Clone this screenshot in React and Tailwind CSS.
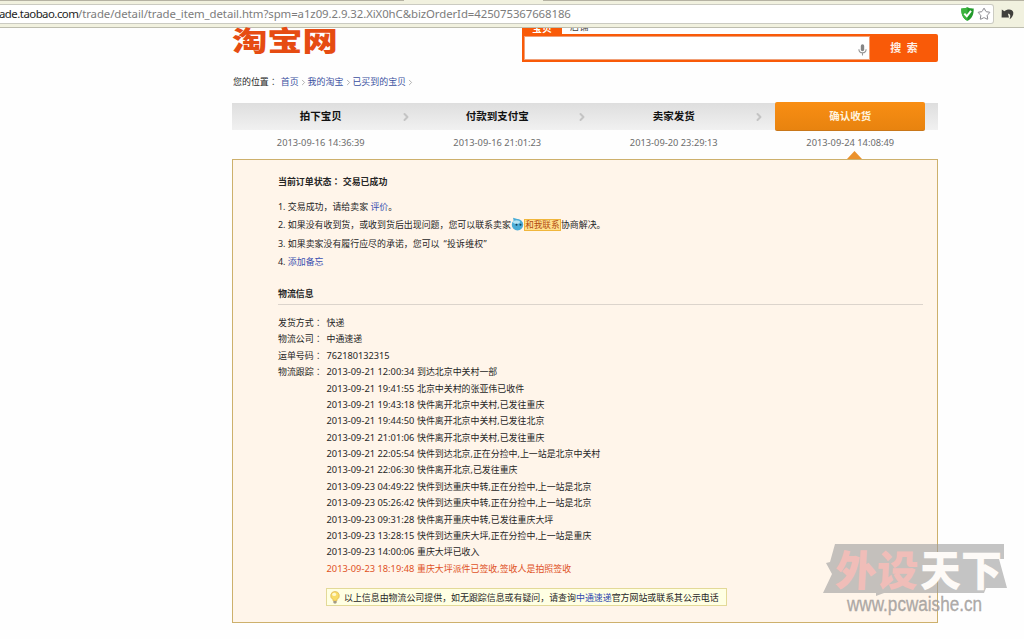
import { ChevronRight, Star } from 'lucide-react';

const steps = [
  { title: '拍下宝贝', time: '2013-09-16 14:36:39' },
  { title: '付款到支付宝', time: '2013-09-16 21:01:23' },
  { title: '卖家发货', time: '2013-09-20 23:29:13' },
  { title: '确认收货', time: '2013-09-24 14:08:49', active: true },
];

const shipping = [
  { label: '发货方式', value: '快递' },
  { label: '物流公司', value: '中通速递' },
  { label: '运单号码', value: '762180132315', number: true },
];

const tracking = [
  { time: '2013-09-21 12:00:34', text: '到达北京中关村一部' },
  { time: '2013-09-21 19:41:55', text: '北京中关村的张亚伟已收件' },
  { time: '2013-09-21 19:43:18', text: '快件离开北京中关村,已发往重庆' },
  { time: '2013-09-21 19:44:50', text: '快件离开北京中关村,已发往北京' },
  { time: '2013-09-21 21:01:06', text: '快件离开北京中关村,已发往重庆' },
  { time: '2013-09-21 22:05:54', text: '快件到达北京,正在分捡中,上一站是北京中关村' },
  { time: '2013-09-21 22:06:30', text: '快件离开北京,已发往重庆' },
  { time: '2013-09-23 04:49:22', text: '快件到达重庆中转,正在分捡中,上一站是北京' },
  { time: '2013-09-23 05:26:42', text: '快件到达重庆中转,正在分捡中,上一站是北京' },
  { time: '2013-09-23 09:31:28', text: '快件离开重庆中转,已发往重庆大坪' },
  { time: '2013-09-23 13:28:15', text: '快件到达重庆大坪,正在分捡中,上一站是重庆' },
  { time: '2013-09-23 14:00:06', text: '重庆大坪已收入' },
  { time: '2013-09-23 18:19:48', text: '重庆大坪派件已签收,签收人是拍照签收', last: true },
];

function ShieldIcon() {
  return (
    <svg className="h-[14px] w-[13px]" viewBox="0 0 13 14">
      <path d="M6.5 0.3 C8.5 1.4 10.5 1.6 12.7 1.4 C12.8 7.5 11.2 11.5 6.5 13.7 C1.8 11.5 0.2 7.5 0.3 1.4 C2.5 1.6 4.5 1.4 6.5 0.3Z" fill="#239a2b" />
      <path d="M6.5 0.3 C4.5 1.4 2.5 1.6 0.3 1.4 C0.2 7.5 1.8 11.5 6.5 13.7Z" fill="#3cb43f" />
      <path d="M3.3 6.6 L5.8 9.3 L10 3.8" fill="none" stroke="#fff" strokeWidth="2" />
    </svg>
  );
}

function UndoIcon() {
  return (
    <svg className="h-[12px] w-[13px]" viewBox="0 0 13 12">
      <path d="M0.8 1.5 L3.4 3.3 C6 0.6 11.8 0.6 12.3 4.6 C12.6 7.5 11 9.8 8.6 11.2 C9.9 8.2 9.4 5.6 6.9 5.8 L8 9.4 L0.6 9.6Z" fill="#403f3c" />
    </svg>
  );
}

function MicIcon() {
  return (
    <svg className="mr-[2px] h-[12px] w-[9px]" viewBox="0 0 9 12">
      <rect x="2.8" y="0.3" width="3.4" height="7" rx="1.7" fill="#858585" />
      <path d="M0.9 5.2 C0.9 10 8.1 10 8.1 5.2 M4.5 8.8 V11.6" fill="none" stroke="#959595" strokeWidth="1.1" />
    </svg>
  );
}

function BrowserBar() {
  return (
    <div className="flex h-7 flex-col border-b border-[#bdbdae] bg-[#f1f1df]">
      <div className="flex h-px">
        <div className="w-[404px] bg-[#b5b2a3]" />
        <div className="w-[139px]" />
        <div className="grow bg-[#b5b2a3]" />
      </div>
      <div className="mt-[3px] flex h-5 items-center">
        <div className="flex h-5 w-[994px] items-center rounded-r-[3px] border border-l-0 border-[#cbcbc2] bg-white">
          <div className="-ml-px flex grow whitespace-pre font-['Noto_Sans'] text-[11.4px] text-[#7c7c7c]">
            <span className="w-[79px] tracking-[-0.52px] text-[#1d1d1d]">ade.taobao.com</span>
            <span className="tracking-[-0.08px]">/trade/detail/trade_item_detail.htm?spm=a1z09.2.9.32.XiX0hC&amp;bizOrderId=425075367668186</span>
          </div>
          <ShieldIcon />
          <Star className="ml-[3px] mr-[2px] size-[14px] text-[#85858a]" strokeWidth={1.7} />
        </div>
        <div className="ml-[7px]">
          <UndoIcon />
        </div>
      </div>
    </div>
  );
}

function Header() {
  return (
    <header className="flex h-[35px] justify-between">
      <div className="-mt-[1px] h-[35px] origin-top scale-y-[0.77] whitespace-nowrap text-[35.3px] leading-[35px] font-black text-[#e64c12]">
        淘宝网
      </div>
      <div className="w-[416px]">
        <div className="flex h-[6px] text-[10px] leading-[4px] font-bold">
          <div className="flex w-10 items-start justify-center overflow-hidden bg-[#f95a08] text-white">
            <span className="-mt-[2px]">宝贝</span>
          </div>
          <div className="ml-2 flex items-start overflow-hidden text-[9.3px] font-normal text-[#444]">
            <span className="-mt-[3px]">店铺</span>
          </div>
        </div>
        <div className="flex h-[28px] overflow-hidden rounded-r-[2px] bg-[#f95a08]">
          <div className="my-[2px] ml-[2px] flex w-[346px] items-center justify-end border border-[#f0a078] bg-white pt-[3px]">
            <MicIcon />
          </div>
          <div className="flex grow items-center justify-center whitespace-pre text-[11px] font-bold text-[#fff0e6]">搜  索</div>
        </div>
      </div>
    </header>
  );
}

// the TC face centres the full-width colon in its cell
function Colon() {
  return <span className="font-['Noto_Sans_CJK_TC']">：</span>;
}

function Breadcrumb() {
  return (
    <nav className="ml-[1px] flex h-[14px] items-center text-[8.95px] leading-[14px]">
      <span className="mr-[3px]">您的位置<Colon /></span>
      {['首页', '我的淘宝', '已买到的宝贝'].map((name) => (
        <span key={name} className="flex items-center text-[#3a50a0]">
          {name}
          <ChevronRight className="mr-[-0.3px] ml-[0.3px] size-[9px] text-[#999]" />
        </span>
      ))}
    </nav>
  );
}

function Steps() {
  return (
    <div className="grid h-[57px] grid-cols-4">
      {steps.map((step) => (
        <div key={step.title} className="flex flex-col">
          <div className="relative mt-[1px] flex h-[27px] items-center justify-center bg-linear-to-b from-[#dedede] to-[#f1f1f1] pt-[1px] pl-[1px] text-[10.5px] font-bold text-[#111]">
            {step.active ? (
              <div className="-mt-[2px] -mb-[1px] flex h-[29px] w-[150px] shrink-0 items-center justify-center rounded-[2px] border-b border-[#c9771a] bg-linear-to-b from-[#f98e13] to-[#e8830f] pt-[2px] text-[#fff3df]">
                {step.title}
              </div>
            ) : (
              <>
                {step.title}
                <ChevronRight className="absolute right-[-3px] size-[12px] text-[#c4c4c4]" strokeWidth={4} />
              </>
            )}
          </div>
          <div className="mt-[5px] pl-[1px] text-center font-['Noto_Sans'] text-[9.3px] leading-[15px] text-[#6c6c6c]">{step.time}</div>
          {step.active && (
            <svg className="mt-[1px] ml-[85px] h-[8px] w-[15px]" viewBox="0 0 15 8">
              <path d="M0 8 L7.5 0 L15 8Z" fill="#eb922c" />
            </svg>
          )}
        </div>
      ))}
    </div>
  );
}

function WangwangBadge() {
  return (
    <span className="flex items-center">
      <svg className="mb-[2px] h-[14px] w-[13px]" viewBox="0 0 13 14">
        <circle cx="6.5" cy="7.8" r="5.7" fill="#4aacd6" />
        <path d="M2 0.8 L8 2.5 L3 5Z" fill="#4aacd6" />
        <ellipse cx="5.5" cy="5" rx="3.5" ry="1.8" fill="#b4e3f3" />
        <circle cx="5.5" cy="7.8" r="1" fill="#173e59" />
        <circle cx="9.5" cy="7.8" r="1" fill="#173e59" />
      </svg>
      <span className="flex h-[12px] w-[37px] items-center justify-center border border-[#f0b63c] bg-[#ffe18d] text-[8.6px] leading-none text-[#b34a10]">和我联系</span>
    </span>
  );
}

function Notices() {
  return (
    <ol className="mt-[9px] leading-[18.5px]">
      <li>1. 交易成功，请给卖家 <span className="text-[#3a50b0]">评价</span>。</li>
      <li className="flex h-[18.5px] items-center whitespace-pre">
        2. 如果没有收到货，或收到货后出现问题，您可以联系卖家
        <WangwangBadge />
        协商解决。
      </li>
      <li>3. 如果卖家没有履行应尽的承诺，您可以<span className="ml-[4px] tracking-[0.2px]">“投诉维权”</span></li>
      <li>4. <span className="text-[#3a50b0]">添加备忘</span></li>
    </ol>
  );
}

function Logistics() {
  return (
    <section className="mt-[15px]">
      <h3 className="h-[18px] border-b border-[#dcd4cc] font-bold leading-[14px]">物流信息</h3>
      <div className="mt-[10.6px] leading-[16.38px]">
        {shipping.map((item) => (
          <div key={item.label} className="flex h-[16.38px]">
            <span className="w-[48.5px]">{item.label}<Colon /></span>
            <span className={item.number ? 'text-[9.2px]' : ''}>{item.value}</span>
          </div>
        ))}
        <div className="flex">
          <span className="w-[48.5px] shrink-0">物流跟踪<Colon /></span>
          <ul>
            {tracking.map((row) => (
              <li key={row.time} className={`flex h-[16.38px] whitespace-nowrap ${row.last ? 'text-[#e0521f]' : ''}`}>
                <span className="w-[90.5px] text-[9.3px]">{row.time}</span>
                <span>{row.text}</span>
              </li>
            ))}
          </ul>
        </div>
      </div>
    </section>
  );
}

function Tip() {
  return (
    <div className="mt-[11.4px] ml-[48px] flex h-[18px] w-[401px] items-center whitespace-nowrap border border-[#e3d998] bg-[#ffffe3]">
      <svg className="mr-[4px] ml-[3px] h-[13px] w-[10px]" viewBox="0 0 10 13">
        <path d="M5 0.4 A4.3 4.3 0 0 1 7.2 8.4 L6.8 10 L3.2 10 L2.8 8.4 A4.3 4.3 0 0 1 5 0.4Z" fill="#f8dc68" stroke="#d9a94a" strokeWidth="0.6" />
        <ellipse cx="4.2" cy="3.4" rx="2" ry="1.7" fill="#fff8cf" />
        <path d="M3.4 10 H6.6 V12 L5 12.8 L3.4 12Z" fill="#a39a84" />
      </svg>
      以上信息由物流公司提供，如无跟踪信息或有疑问，请查询<span className="text-[#2f49b0]">中通速递</span>官方网站或联系其公示电话
    </div>
  );
}

function Watermark() {
  return (
    <svg className="absolute top-[540px] left-[820px] h-[90px] w-[190px]" viewBox="0 0 190 90">
      <path d="M15 4 H184 V19 H179 L187 48 H166 L164 53 H64 L56 56 V53 H3 L12 34 L6 23 L10 22Z" fill="#9c9c9c" fillOpacity="0.6" />
      <g fontFamily="'Noto Sans CJK SC', sans-serif" fontWeight="900" fontSize="42">
        <text x="14" y="46" textLength="83" lengthAdjust="spacingAndGlyphs" fill="#f0bdb8" transform="translate(3 0) skewX(-3)">外设</text>
        <text x="100" y="46" textLength="82" lengthAdjust="spacingAndGlyphs" fill="#fdfaf7">天下</text>
      </g>
      <text x="27" y="71" fontFamily="'Liberation Sans', sans-serif" fontSize="19.5" textLength="135" lengthAdjust="spacingAndGlyphs" fill="#a5a19e" stroke="#a5a19e" strokeWidth="0.3" fillOpacity="0.9">www.pcwaishe.cn</text>
    </svg>
  );
}

function App() {
  return (
    <div className="relative h-[639px] w-[1024px] overflow-hidden bg-[#fefefe] font-['Noto_Sans','Noto_Sans_CJK_SC',sans-serif] text-[#262626]">
      <BrowserBar />
      <main className="ml-[232px] w-[706px]">
        <Header />
        <div className="mt-[12px]">
          <Breadcrumb />
        </div>
        <div className="mt-[13px]">
          <Steps />
        </div>
        <div className="h-[464px] border border-[#cdb06c] bg-[#fff5ea] pt-[14.5px] pr-[14px] pl-[45px] text-[8.93px]">
          <h2 className="font-bold leading-[14px]">当前订单状态<Colon /> 交易已成功</h2>
          <Notices />
          <Logistics />
          <Tip />
        </div>
      </main>
      <Watermark />
    </div>
  );
}

export default App;
